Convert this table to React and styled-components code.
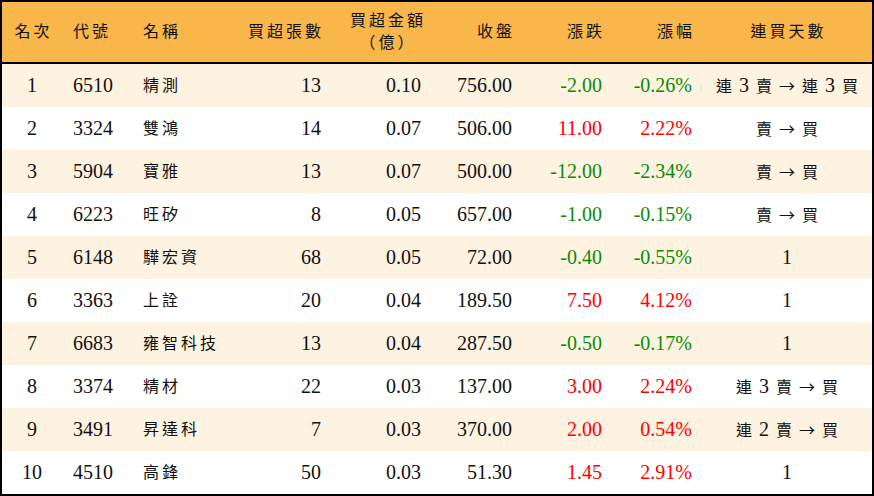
import React from "react";
import styled, {createGlobalStyle} from "styled-components";

const rows = [
  {rank: 1, code: "6510", name: "精測", qty: 13, amt: "0.10", close: "756.00", chg: "-2.00", pct: "-0.26%", days: "連 3 賣 → 連 3 買"},
  {rank: 2, code: "3324", name: "雙鴻", qty: 14, amt: "0.07", close: "506.00", chg: "11.00", pct: "2.22%", days: "賣 → 買"},
  {rank: 3, code: "5904", name: "寶雅", qty: 13, amt: "0.07", close: "500.00", chg: "-12.00", pct: "-2.34%", days: "賣 → 買"},
  {rank: 4, code: "6223", name: "旺矽", qty: 8, amt: "0.05", close: "657.00", chg: "-1.00", pct: "-0.15%", days: "賣 → 買"},
  {rank: 5, code: "6148", name: "驊宏資", qty: 68, amt: "0.05", close: "72.00", chg: "-0.40", pct: "-0.55%", days: "1"},
  {rank: 6, code: "3363", name: "上詮", qty: 20, amt: "0.04", close: "189.50", chg: "7.50", pct: "4.12%", days: "1"},
  {rank: 7, code: "6683", name: "雍智科技", qty: 13, amt: "0.04", close: "287.50", chg: "-0.50", pct: "-0.17%", days: "1"},
  {rank: 8, code: "3374", name: "精材", qty: 22, amt: "0.03", close: "137.00", chg: "3.00", pct: "2.24%", days: "連 3 賣 → 買"},
  {rank: 9, code: "3491", name: "昇達科", qty: 7, amt: "0.03", close: "370.00", chg: "2.00", pct: "0.54%", days: "連 2 賣 → 買"},
  {rank: 10, code: "4510", name: "高鋒", qty: 50, amt: "0.03", close: "51.30", chg: "1.45", pct: "2.91%", days: "1"},
];

// CJK runs (and the arrow) get the CJK font, digits stay in the serif
const mixed = (text) =>
  text.split(/([\u4e00-\u9fff\u2192]+)/).map((part, i) =>
    /[\u4e00-\u9fff\u2192]/.test(part) ? <Han key={i} $tight>{part}</Han> : part
  );

const App = () => {
  return (
    <>
      <GlobalStyle />
      <Table>
        <HeaderRow>
          <Cell $align="center"><Han>名次</Han></Cell>
          <Cell $pad="left"><Han>代號</Han></Cell>
          <Cell $pad="left"><Han>名稱</Han></Cell>
          <Cell $align="right"><Han>買超張數</Han></Cell>
          <Cell $align="right">
            <Stacked>
              <Han>買超金額</Han>
              <Han>（億）</Han>
            </Stacked>
          </Cell>
          <Cell $align="right"><Han>收盤</Han></Cell>
          <Cell $align="right"><Han>漲跌</Han></Cell>
          <Cell $align="right"><Han>漲幅</Han></Cell>
          <Cell $align="center"><Han>連買天數</Han></Cell>
        </HeaderRow>
        {rows.map((r, i) => {
          const tone = r.chg.startsWith("-") ? "down" : "up";
          return (
            <BodyRow key={r.rank} $striped={i % 2 === 0}>
              <Cell $align="center">{r.rank}</Cell>
              <Cell $pad="left">{r.code}</Cell>
              <Cell $pad="left"><Han>{r.name}</Han></Cell>
              <Cell $align="right">{r.qty}</Cell>
              <Cell $align="right">{r.amt}</Cell>
              <Cell $align="right">{r.close}</Cell>
              <Cell $align="right" $tone={tone}>{r.chg}</Cell>
              <Cell $align="right" $tone={tone}>{r.pct}</Cell>
              <Cell $align="center"><Days>{mixed(r.days)}</Days></Cell>
            </BodyRow>
          );
        })}
      </Table>
    </>
  );
};

const GlobalStyle = createGlobalStyle`
  body {
    margin: 0;
    background: #FFFFFF;
  }
  #root {
    width: 874px;
    height: 496px;
  }
`;

const Table = styled.div`
  box-sizing: border-box;
  width: 874px;
  height: 496px;
  border: 2px solid #000000;
  font-family: "Liberation Serif", "Noto Sans CJK TC", serif;
  font-size: 20px;
  color: #111111;
`;

const columns = "60px 70px 99px 100px 100px 91px 90px 90px 1fr";

const HeaderRow = styled.div`
  display: grid;
  grid-template-columns: ${columns};
  height: 60px;
  background-color: #F9B74B;
  border-bottom: 2px solid #000000;
`;

const BodyRow = styled.div`
  display: grid;
  grid-template-columns: ${columns};
  height: 43px;
  background-color: ${p => (p.$striped ? "#FEF3E0" : "#FFFFFF")};
`;

const Cell = styled.div`
  display: flex;
  align-items: center;
  justify-content: ${p =>
    p.$align === "right" ? "flex-end" : p.$align === "center" ? "center" : "flex-start"};
  padding: ${p =>
    p.$align === "right" ? "0 10px 0 0" : p.$pad === "left" ? "0 0 0 11px" : "0"};
  white-space: nowrap;
  color: ${p => (p.$tone === "down" ? "#0A8A0A" : p.$tone === "up" ? "#FF0000" : "#111111")};
`;

const Han = styled.span`
  display: inline-block;
  font-family: "Noto Sans CJK TC", sans-serif;
  font-size: 16px;
  line-height: 1;
  font-weight: 400;
  letter-spacing: ${p => (p.$tight ? "0" : "3px")};
  margin-right: ${p => (p.$tight ? "0" : "-3px")};
  margin-bottom: ${p => (p.$tight ? "0" : "4px")};
`;

const Days = styled.span`
  white-space: pre;
  word-spacing: 2px;
`;

const Stacked = styled.div`
  display: flex;
  flex-direction: column;
  align-items: center;
  gap: 2px;
  margin-right: -2px;
`;

export default App;
